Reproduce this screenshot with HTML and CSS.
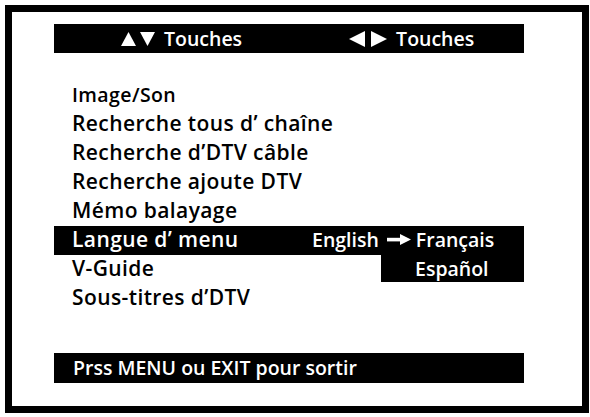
FILE: index.html
```html
<!DOCTYPE html>
<html lang="fr">
<head>
<meta charset="utf-8">
<title>Langue d' menu</title>
<link rel="stylesheet" href="styles.css">
</head>
<body>
<div class="frame">
  <div class="keys">
    <div class="key key-ud">
      <svg class="tri" width="35" height="16" viewBox="0 0 35 16"><polygon points="0,15 7.5,1 15,15" fill="#fff"/><polygon points="19,1 34,1 26.5,15" fill="#fff"/></svg>
      <span>Touches</span>
    </div>
    <div class="key key-lr">
      <svg class="tri" width="41" height="16" viewBox="0 0 41 16"><polygon points="0,8 16,0 16,16" fill="#fff"/><polygon points="22,0 38,8 22,16" fill="#fff"/></svg>
      <span>Touches</span>
    </div>
  </div>

  <div class="menu">
    <div class="row row-small">Image/Son</div>
    <div class="row">Recherche tous d’ chaîne</div>
    <div class="row">Recherche d’DTV câble</div>
    <div class="row">Recherche ajoute DTV</div>
    <div class="row">Mémo balayage</div>
    <div class="row row-sel">
      <span class="label">Langue d’ menu</span>
      <span class="value">English
        <svg class="arrow" width="24" height="11" viewBox="0 0 24 11"><rect x="0" y="3.8" width="15" height="3.6" fill="#fff"/><polygon points="13,0 24,5.5 13,11" fill="#fff"/></svg>
        Français</span>
    </div>
    <div class="row row-opt">
      <span class="label">V-Guide</span>
      <span class="option">Español</span>
    </div>
    <div class="row">Sous-titres d’DTV</div>
  </div>

  <div class="footer">Prss MENU ou EXIT pour sortir</div>
</div>
</body>
</html>
```

FILE: styles.css
```css
html, body {
  margin: 0;
  padding: 0;
  background: #fff;
}
body {
  width: 590px;
  height: 417px;
  font-family: "Open Sans", "Liberation Sans", sans-serif;
  font-weight: 600;
  color: #000;
}
.frame {
  box-sizing: border-box;
  margin: 5px 0 0 5px;
  width: 584px;
  height: 408px;
  border: 7px solid #000;
  padding: 12px 58px 0 42px;
  display: flex;
  flex-direction: column;
}
.keys {
  height: 29px;
  background: #000;
  color: #fff;
  display: flex;
  align-items: center;
  font-size: 19.5px;
  line-height: 29px;
}
.key {
  display: flex;
  align-items: center;
}
.key-ud {
  margin-left: 67px;
}
.key-lr {
  margin-left: 107px;
}
.tri {
  margin-right: 8px;
}
.key-lr .tri {
  margin-right: 6px;
}
.menu {
  margin-top: 28px;
  display: flex;
  flex-direction: column;
}
.row {
  box-sizing: border-box;
  height: 29px;
  line-height: 27px;
  padding-bottom: 2px;
  font-size: 21px;
  letter-spacing: 0.4px;
  padding-left: 18px;
  white-space: nowrap;
  display: flex;
  align-items: center;
}
.row-small {
  font-size: 19.5px;
}
.row-sel {
  background: #000;
  color: #fff;
}
.row-sel .label {
  width: 240px;
}
.value {
  display: flex;
  align-items: center;
  font-size: 19.5px;
  letter-spacing: 0;
}
.arrow {
  margin: 0 5px 0 8px;
}
.row-opt {
  align-items: stretch;
}
.row-opt .label {
  width: 309px;
}
.option {
  flex: 1;
  background: #000;
  color: #fff;
  line-height: 27px;
  font-size: 19.5px;
  letter-spacing: 0;
  padding-left: 34px;
}
.footer {
  margin-top: 40px;
  height: 30px;
  line-height: 30px;
  background: #000;
  color: #fff;
  font-size: 19.5px;
  padding-left: 19px;
  white-space: nowrap;
}
```
